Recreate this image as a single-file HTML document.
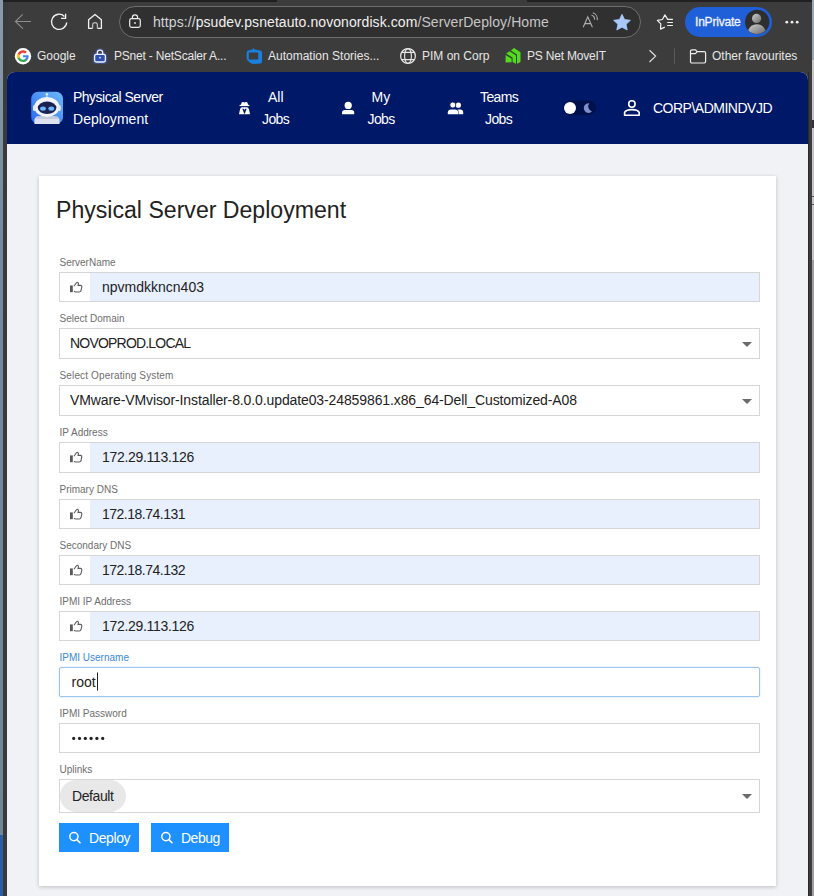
<!DOCTYPE html>
<html><head><meta charset="utf-8">
<style>
*{box-sizing:border-box;margin:0;padding:0}
html,body{width:814px;height:896px;overflow:hidden}
body{position:relative;background:#3c3c3c;font-family:"Liberation Sans",sans-serif}
.a{position:absolute}
.t{position:absolute;white-space:nowrap;line-height:1}
.chrome{color:#e6e6e6;font-size:12px}
.lbl{position:absolute;left:59.5px;font-size:10px;color:#6e6e6e;line-height:1;white-space:nowrap}
.inp{position:absolute;left:59px;width:701px;height:30px;border:1px solid #d6d6d6;background:#fff}
.inp .ib{position:absolute;left:30px;top:0;right:0;bottom:0;background:#e8f0fe}
.inp .tx{position:absolute;left:42px;top:7px;font-size:14px;line-height:1;color:#222;white-space:nowrap}
.sel .tx{left:10px}
.arr{position:absolute;right:7px;top:13px;width:0;height:0;border-left:5px solid transparent;border-right:5px solid transparent;border-top:5.5px solid #6b6b6b}
.btn{position:absolute;top:823px;height:29px;background:#1e90ff}
#ov{position:absolute;left:0;top:0}
.nv{font-size:14px;line-height:22px;color:#fff}
</style></head><body>
<!-- window edges -->
<div class="a" style="left:0;top:0;width:3px;height:835px;background:linear-gradient(#8a9aaa,#7389a0 30%,#6f8598)"></div>
<div class="a" style="left:0;top:835px;width:3px;height:61px;background:#2b5ea8"></div>
<div class="a" style="left:3px;top:0;width:5px;height:896px;background:#393a3a"></div>
<div class="a" style="left:3px;top:0;width:274px;height:2px;background:#202020"></div><div class="a" style="left:527px;top:0;width:287px;height:2px;background:#202020"></div>
<div class="a" style="left:808px;top:72px;width:4px;height:824px;background:#3c3c3e;border-left:1px solid #2a2a2a"></div>
<div class="a" style="left:812px;top:0;width:2px;height:60px;background:#9aa8b4"></div><div class="a" style="left:812px;top:60px;width:2px;height:200px;background:#c6c6c6"></div><div class="a" style="left:812px;top:260px;width:2px;height:636px;background:#a0a0a0"></div><div class="a" style="left:812px;top:120px;width:2px;height:8px;background:#333"></div><div class="a" style="left:812px;top:196px;width:2px;height:1px;background:#555"></div><div class="a" style="left:812px;top:204px;width:2px;height:1px;background:#555"></div>

<!-- toolbar -->
<div class="a" style="left:119px;top:6px;width:522px;height:32px;border:1px solid #6e6e6e;border-radius:16px;background:#303030"></div>
<div class="t chrome" style="left:153px;top:15px;font-size:14px;color:#f0f0f0;letter-spacing:0.08px"><span style="color:#d4d4d4">https://</span>psudev.psnetauto.novonordisk.com<span style="color:#c6c6c6">/ServerDeploy/Home</span></div>
<div class="a" style="left:685px;top:7px;width:87px;height:30px;border-radius:15px;background:#1f5fd8"></div>
<div class="t chrome" style="left:695px;top:16px;color:#f0f4ff;letter-spacing:-0.2px;-webkit-text-stroke:0.3px #f0f4ff">InPrivate</div>

<!-- bookmarks -->
<div class="t chrome" style="left:37px;top:50px">Google</div>
<div class="t chrome" style="left:114px;top:50px;letter-spacing:-0.2px">PSnet - NetScaler A...</div>
<div class="t chrome" style="left:268px;top:50px">Automation Stories...</div>
<div class="t chrome" style="left:422px;top:50px">PIM on Corp</div>
<div class="t chrome" style="left:527px;top:50px;letter-spacing:-0.2px">PS Net MoveIT</div>
<div class="t chrome" style="left:712px;top:50px">Other favourites</div>

<!-- page -->
<div class="a" style="left:7px;top:72px;width:801px;height:824px;background:#f0f2f5;border-radius:8px 8px 0 0;overflow:hidden">
  <div class="a" style="left:0;top:0;width:801px;height:72px;background:#001868"></div>
</div>
<div class="t" style="left:73px;top:86px;font-size:14px;line-height:22px;color:#fff;letter-spacing:-0.5px">Physical Server</div>
<div class="t" style="left:73px;top:108px;font-size:14px;line-height:22px;color:#fff;letter-spacing:0.05px">Deployment</div>
<div class="t nv" style="left:268px;top:86px">All</div>
<div class="t nv" style="left:262px;top:108px;letter-spacing:-0.6px">Jobs</div>
<div class="t nv" style="left:371.5px;top:86px">My</div>
<div class="t nv" style="left:367.5px;top:108px;letter-spacing:-0.6px">Jobs</div>
<div class="t nv" style="left:480px;top:86px;letter-spacing:-0.6px">Teams</div>
<div class="t nv" style="left:485px;top:108px;letter-spacing:-0.6px">Jobs</div>
<div class="t" style="left:653px;top:101px;font-size:14px;color:#fff;letter-spacing:-0.5px">CORP\ADMINDVJD</div>

<!-- card -->
<div class="a" style="left:39px;top:176px;width:737px;height:710px;background:#fff;box-shadow:0 1px 4px rgba(0,0,0,.22)"></div>
<div class="t" style="left:56px;top:199px;font-size:23.1px;color:#222">Physical Server Deployment</div>

<div class="lbl" style="top:258px">ServerName</div>
<div class="inp" style="top:272px"><div class="ib"></div><div class="tx">npvmdkkncn403</div></div>

<div class="lbl" style="top:314px">Select Domain</div>
<div class="inp sel" style="top:328px;height:31px"><div class="tx" style="letter-spacing:-0.8px">NOVOPROD.LOCAL</div><div class="arr"></div></div>

<div class="lbl" style="top:371px;letter-spacing:0.15px">Select Operating System</div>
<div class="inp sel" style="top:385px;height:31px"><div class="tx" style="letter-spacing:-0.11px">VMware-VMvisor-Installer-8.0.0.update03-24859861.x86_64-Dell_Customized-A08</div><div class="arr"></div></div>

<div class="lbl" style="top:428px">IP Address</div>
<div class="inp" style="top:442px;height:31px"><div class="ib"></div><div class="tx" style="letter-spacing:-0.3px">172.29.113.126</div></div>

<div class="lbl" style="top:485px">Primary DNS</div>
<div class="inp" style="top:499px"><div class="ib"></div><div class="tx" style="letter-spacing:-0.5px">172.18.74.131</div></div>

<div class="lbl" style="top:541px">Secondary DNS</div>
<div class="inp" style="top:555px"><div class="ib"></div><div class="tx" style="letter-spacing:-0.5px">172.18.74.132</div></div>

<div class="lbl" style="top:597px">IPMI IP Address</div>
<div class="inp" style="top:611px"><div class="ib"></div><div class="tx" style="letter-spacing:-0.3px">172.29.113.126</div></div>

<div class="lbl" style="top:653px;color:#3a8ad8">IPMI Username</div>
<div class="inp sel" style="top:667px;border-color:#9cc4ec;border-radius:2px;box-shadow:0 0 2px rgba(100,160,230,.35)"><div class="tx" style="left:11.5px">root</div></div>

<div class="lbl" style="top:709px">IPMI Password</div>
<div class="inp sel" style="top:723px"></div>

<div class="lbl" style="top:765px">Uplinks</div>
<div class="inp sel" style="top:779px;height:34px"><div class="arr" style="top:14px"></div></div>
<div class="a" style="left:60px;top:780px;width:66px;height:32px;border-radius:16px;background:#e8e8e8"></div>
<div class="t" style="left:72px;top:789px;font-size:14px;color:#222;letter-spacing:-0.4px">Default</div>

<div class="btn" style="left:59px;width:80px"></div>
<div class="btn" style="left:151px;width:78px"></div>
<div class="t" style="left:89px;top:831px;font-size:14px;color:#fff;letter-spacing:-0.4px">Deploy</div>
<div class="t" style="left:181px;top:831px;font-size:14px;color:#fff;letter-spacing:-0.5px">Debug</div>

<svg id="ov" width="814" height="896" viewBox="0 0 814 896" fill="none">
  <!-- back -->
  <path d="M31 21.5H15.6M22.7 14.4L15.4 21.5L22.9 28.6" stroke="#8e8e8e" stroke-width="1.1"/>
  <!-- refresh -->
  <path d="M66.67 22.46A7.6 7.6 0 1 1 64.47 16.43" stroke="#f2f2f2" stroke-width="1.3"/>
  <path d="M61 18.4H65.6V13.8" stroke="#f2f2f2" stroke-width="1.3"/>
  <!-- home -->
  <path d="M92.6 28.3H88.6V19.8L95 14.5L101.4 19.8V28.3H97.4" stroke="#f2f2f2" stroke-width="1.3" stroke-linejoin="round"/><path d="M92.6 28.3V25A2.4 2.4 0 0 1 97.4 25V28.3" stroke="#b8b8b8" stroke-width="1.3"/>
  <!-- lock -->
  <rect x="129.7" y="18.6" width="10.6" height="8.8" rx="1.8" stroke="#eee" stroke-width="1.2"/>
  <path d="M132.4 18.6V17.4A2.6 2.6 0 0 1 137.6 17.4V18.6" stroke="#eee" stroke-width="1.2"/>
  <rect x="134.2" y="22.2" width="1.6" height="1.6" fill="#eee"/>
  <!-- read aloud -->
  <path d="M583.2 27.2L587.8 16.8L592.4 27.2M584.9 23.6H590.8" stroke="#b0b0b0" stroke-width="1.1"/>
  <path d="M591.5 15.2A4 4 0 0 1 594.5 19.6M592.8 12.8A6.5 6.5 0 0 1 597.2 20.2" stroke="#b0b0b0" stroke-width="1.1"/>
  <!-- fav star filled -->
  <path d="M622 14.3L624.6 19.6L630.4 20.3L626.1 24.3L627.2 30L622 27.2L616.8 30L617.9 24.3L613.6 20.3L619.4 19.6Z" fill="#a8c8fa" stroke="#a8c8fa" stroke-width="0.8" stroke-linejoin="round"/>
  <!-- favorites icon -->
  <path d="M672.9 19.4H667.7L664.9 14.9L662.4 19.5L657.4 20.4L660.8 23.8L660.5 29.1L664.8 27.1" stroke="#f2f2f2" stroke-width="1.2" stroke-linejoin="round"/>
  <path d="M667.2 22.5H672.9M667.2 25.5H672.9" stroke="#f2f2f2" stroke-width="1.2"/>
  <!-- avatar -->
  <defs><linearGradient id="av" x1="0" y1="0" x2="1" y2="1"><stop offset="0" stop-color="#d0d0d0"/><stop offset="1" stop-color="#6a6a6a"/></linearGradient></defs>
  <circle cx="757.2" cy="22" r="12.2" fill="#2e2e2e"/>
  <circle cx="756.6" cy="18.4" r="4.6" fill="url(#av)"/>
  <path d="M748.2 30.2Q750.5 24.2 756.8 24.2Q763 24.2 765.6 30.4A12 12 0 0 1 748.2 30.2Z" fill="url(#av)"/>
  <!-- dots -->
  <circle cx="786.8" cy="22.2" r="1.4" fill="#eee"/><circle cx="792" cy="22.2" r="1.4" fill="#eee"/><circle cx="797.2" cy="22.2" r="1.4" fill="#eee"/>

  <!-- google -->
  <circle cx="23" cy="56.2" r="8.2" fill="#fff"/>
  <g transform="translate(17.1 50.3) scale(0.49)">
    <path d="M23.5 12.3c0-.8-.1-1.6-.2-2.3H12v4.4h6.5c-.3 1.5-1.1 2.7-2.4 3.6v2.9h3.9c2.2-2.1 3.5-5.1 3.5-8.6z" fill="#4285F4"/>
    <path d="M12 24c3.2 0 6-1.1 8-2.9L16.1 18c-1.1.7-2.4 1.2-4.1 1.2-3.1 0-5.8-2.1-6.7-5H1.3v3.1C3.3 21.3 7.3 24 12 24z" fill="#34A853"/>
    <path d="M5.3 14.3c-.3-.7-.4-1.5-.4-2.3s.1-1.6.4-2.3V6.6H1.3C.5 8.2 0 10 0 12s.5 3.8 1.3 5.4l4-3.1z" fill="#FBBC05"/>
    <path d="M12 4.8c1.8 0 3.4.6 4.6 1.8l3.4-3.4C18 1.2 15.2 0 12 0 7.3 0 3.3 2.7 1.3 6.6l4 3.1c.9-2.8 3.6-4.9 6.7-4.9z" fill="#EA4335"/>
  </g>
  <!-- psnet lock -->
  <rect x="93.6" y="53.4" width="12.8" height="9.6" rx="2.6" stroke="#4a64d8" stroke-opacity=".45" stroke-width="2"/>
  <path d="M96.3 53.8V52.6A3.7 3.7 0 0 1 103.7 52.6V53.8" stroke="#4a64d8" stroke-opacity=".4" stroke-width="2"/>
  <rect x="94.6" y="54.4" width="10.8" height="7.6" rx="1.8" fill="#2f4fae" stroke="#eef2ff" stroke-width="1.3"/>
  <path d="M97.3 54.4V52.8A2.7 2.7 0 0 1 102.7 52.8V54.4" stroke="#eef2ff" stroke-width="1.3"/>
  <circle cx="100" cy="57.6" r="0.9" fill="#dfe8ff"/>
  <!-- azure devops -->
  <path fill-rule="evenodd" fill="#1a7fe0" d="M246.6 52.4Q246.8 50.6 249 50.2L252.4 49.4L253.4 48L254.6 49.6L260.4 50.4Q262 50.8 262 52.4V61.8Q262 63.4 260.4 63.6L253.4 64Q251.2 64 249.8 62.6L247.6 60.4Q246.6 59.4 246.6 57.8ZM248.8 52.4V59.6H258.2V52.4Z"/>
  <!-- globe -->
  <circle cx="408" cy="56" r="7.4" stroke="#e8e8e8" stroke-width="1.2"/>
  <ellipse cx="408" cy="56" rx="3.4" ry="7.4" stroke="#e8e8e8" stroke-width="1.1"/>
  <path d="M401.6 52.4H414.4M401.6 59.6H414.4" stroke="#e8e8e8" stroke-width="1.1"/>
  <!-- green moveit -->
  <path d="M514 48L520.5 52.2V62L517 63.8V54.6L510.8 50.4Z" fill="#4fdc1a"/>
  <path d="M509.6 51.2L516 55.4V63.8L512.6 62V57.6L506.2 53.6Z" fill="#4fdc1a"/>
  <path d="M505.6 55L511.6 58.8V62.2L505.6 62.6Z" fill="#4fdc1a"/>
  <!-- chevron -->
  <path d="M649.5 50.2L655.6 56.1L649.5 62" stroke="#ddd" stroke-width="1.2"/>
  <path d="M674.5 48.4V63.8" stroke="#5a5a5a" stroke-width="1"/>
  <!-- folder -->
  <path d="M690.5 51.2A1.4 1.4 0 0 1 691.9 49.8H695.6L697.2 51.6H704.2A1.4 1.4 0 0 1 705.6 53V61.6A1.4 1.4 0 0 1 704.2 63H691.9A1.4 1.4 0 0 1 690.5 61.6Z" stroke="#eee" stroke-width="1.2" stroke-linejoin="round"/>
  <path d="M690.5 53.6H695.4L697.2 51.6" stroke="#eee" stroke-width="1.2" stroke-linejoin="round"/>

  <!-- robot logo -->
  <defs>
    <linearGradient id="lg" x1="1" y1="0" x2="0" y2="1">
      <stop offset="0" stop-color="#6cbaf8"/><stop offset="1" stop-color="#2a68ee"/>
    </linearGradient>
  </defs>
  <rect x="31.2" y="91.8" width="31.8" height="32.2" rx="7" fill="url(#lg)"/>
  <circle cx="46.9" cy="94.2" r="1.3" fill="#dfeaff"/>
  <path d="M46.9 95.2V97" stroke="#dfeaff" stroke-width="1"/>
  <path d="M34.4 124V120Q34.6 116.2 40 116.2H53.8Q59.3 116.2 59.5 120V124Z" fill="#dde2ee"/><rect x="36" y="116.6" width="22" height="2.4" fill="#c4cbdc"/>
  <ellipse cx="46.9" cy="107" rx="12.6" ry="10" fill="#f2f4fa"/>
  <rect x="33" y="105" width="3" height="6" rx="1.5" fill="#e6eaf4"/>
  <rect x="57.8" y="105" width="3" height="6" rx="1.5" fill="#e6eaf4"/>
  <ellipse cx="47.1" cy="107.8" rx="9.3" ry="6.2" fill="#1a2252"/>
  <ellipse cx="43" cy="108.6" rx="2.9" ry="2.2" fill="#6cb6ff"/>
  <ellipse cx="51.3" cy="108.6" rx="2.9" ry="2.2" fill="#6cb6ff"/>

  <!-- user-secret (All Jobs) -->
  <path d="M240.4 105.8L241.7 102.5Q242.2 101.6 243.2 102L244.5 102.5L245.8 102Q246.8 101.6 247.3 102.5L248.6 105.8Z" fill="#fff"/>
  <rect x="239.6" y="104.9" width="9.8" height="1.2" fill="#fff"/>
  <path d="M239 114.2L240 109.4Q240.4 107.2 242.2 107.2H246.8Q248.6 107.2 249 109.4L250.1 114.2Z" fill="#fff"/>
  <path d="M242.3 108.8L244.5 114.2L246.7 108.8L245.3 108.8L244.5 110L243.7 108.8Z" fill="#001868"/>
  <!-- user (My Jobs) -->
  <circle cx="348.2" cy="105.4" r="3.6" fill="#fff"/>
  <path d="M342 114.2V112.6Q342 110 345 110H351.4Q354.2 110 354.2 112.6V114.2Z" fill="#fff"/>
  <!-- users (Teams) -->
  <circle cx="458.4" cy="105.2" r="2.6" fill="#fff"/>
  <circle cx="452.8" cy="105" r="3" fill="#fff" stroke="#001868" stroke-width="0.8"/>
  <path d="M447.8 114.2V112.4Q448 109.4 451 109.4H455Q458 109.4 458.2 112.4V114.2Z" fill="#fff"/>
  <path d="M458.6 114.2V112.2Q458.6 110.2 457.4 109.4H460.2Q463.2 109.6 463.2 112.4V114.2Z" fill="#fff"/>
  <!-- toggle -->
  <rect x="563.4" y="100.4" width="32.6" height="14.8" rx="7.4" fill="#00104a"/>
  <circle cx="570" cy="108" r="6" fill="#fff"/>
  <path d="M589.2 103.2A4.9 4.9 0 1 0 592 111.6A5.6 5.6 0 0 1 589.2 103.2Z" fill="#7f8fc8"/>
  <!-- user outline -->
  <circle cx="631.9" cy="104" r="3.2" stroke="#fff" stroke-width="1.6"/>
  <path d="M624.6 115.3V112.6Q625.6 109.6 631.9 109.6Q638.2 109.6 639.2 112.6V115.3Z" stroke="#fff" stroke-width="1.6" stroke-linejoin="round"/>

  <!-- thumbs -->
  <g id="th">
    <rect x="70" y="285.4" width="2.8" height="6.8" fill="#5a5a5a"/>
    <path d="M74 286.2L76.4 282.8Q77.4 281.8 78.2 282.8Q78.8 283.6 78 285.4H80.6Q82 285.6 81.8 287.2L81 290.6Q80.6 292 79.2 292H75.8Q74.6 292 74 291.2" stroke="#5a5a5a" stroke-width="1.1" stroke-linejoin="round"/>
  </g>
  <use href="#th" y="170"/>
  <use href="#th" y="227"/>
  <use href="#th" y="283"/>
  <use href="#th" y="339"/>

  <!-- password dots -->
  <g fill="#222"><circle cx="73.7" cy="738.4" r="1.6"/><circle cx="79.5" cy="738.4" r="1.6"/><circle cx="85.3" cy="738.4" r="1.6"/><circle cx="91.1" cy="738.4" r="1.6"/><circle cx="96.9" cy="738.4" r="1.6"/><circle cx="102.7" cy="738.4" r="1.6"/></g>
  <!-- caret -->
  <path d="M97.5 672.5V690.5" stroke="#222" stroke-width="1"/>

  <!-- search icons -->
  <g id="sr">
    <circle cx="73.9" cy="836.6" r="4.1" stroke="#fff" stroke-width="1.5"/>
    <path d="M76.9 839.6L80 842.8" stroke="#fff" stroke-width="1.6" stroke-linecap="round"/>
  </g>
  <use href="#sr" x="92"/>
</svg>
</body></html>
